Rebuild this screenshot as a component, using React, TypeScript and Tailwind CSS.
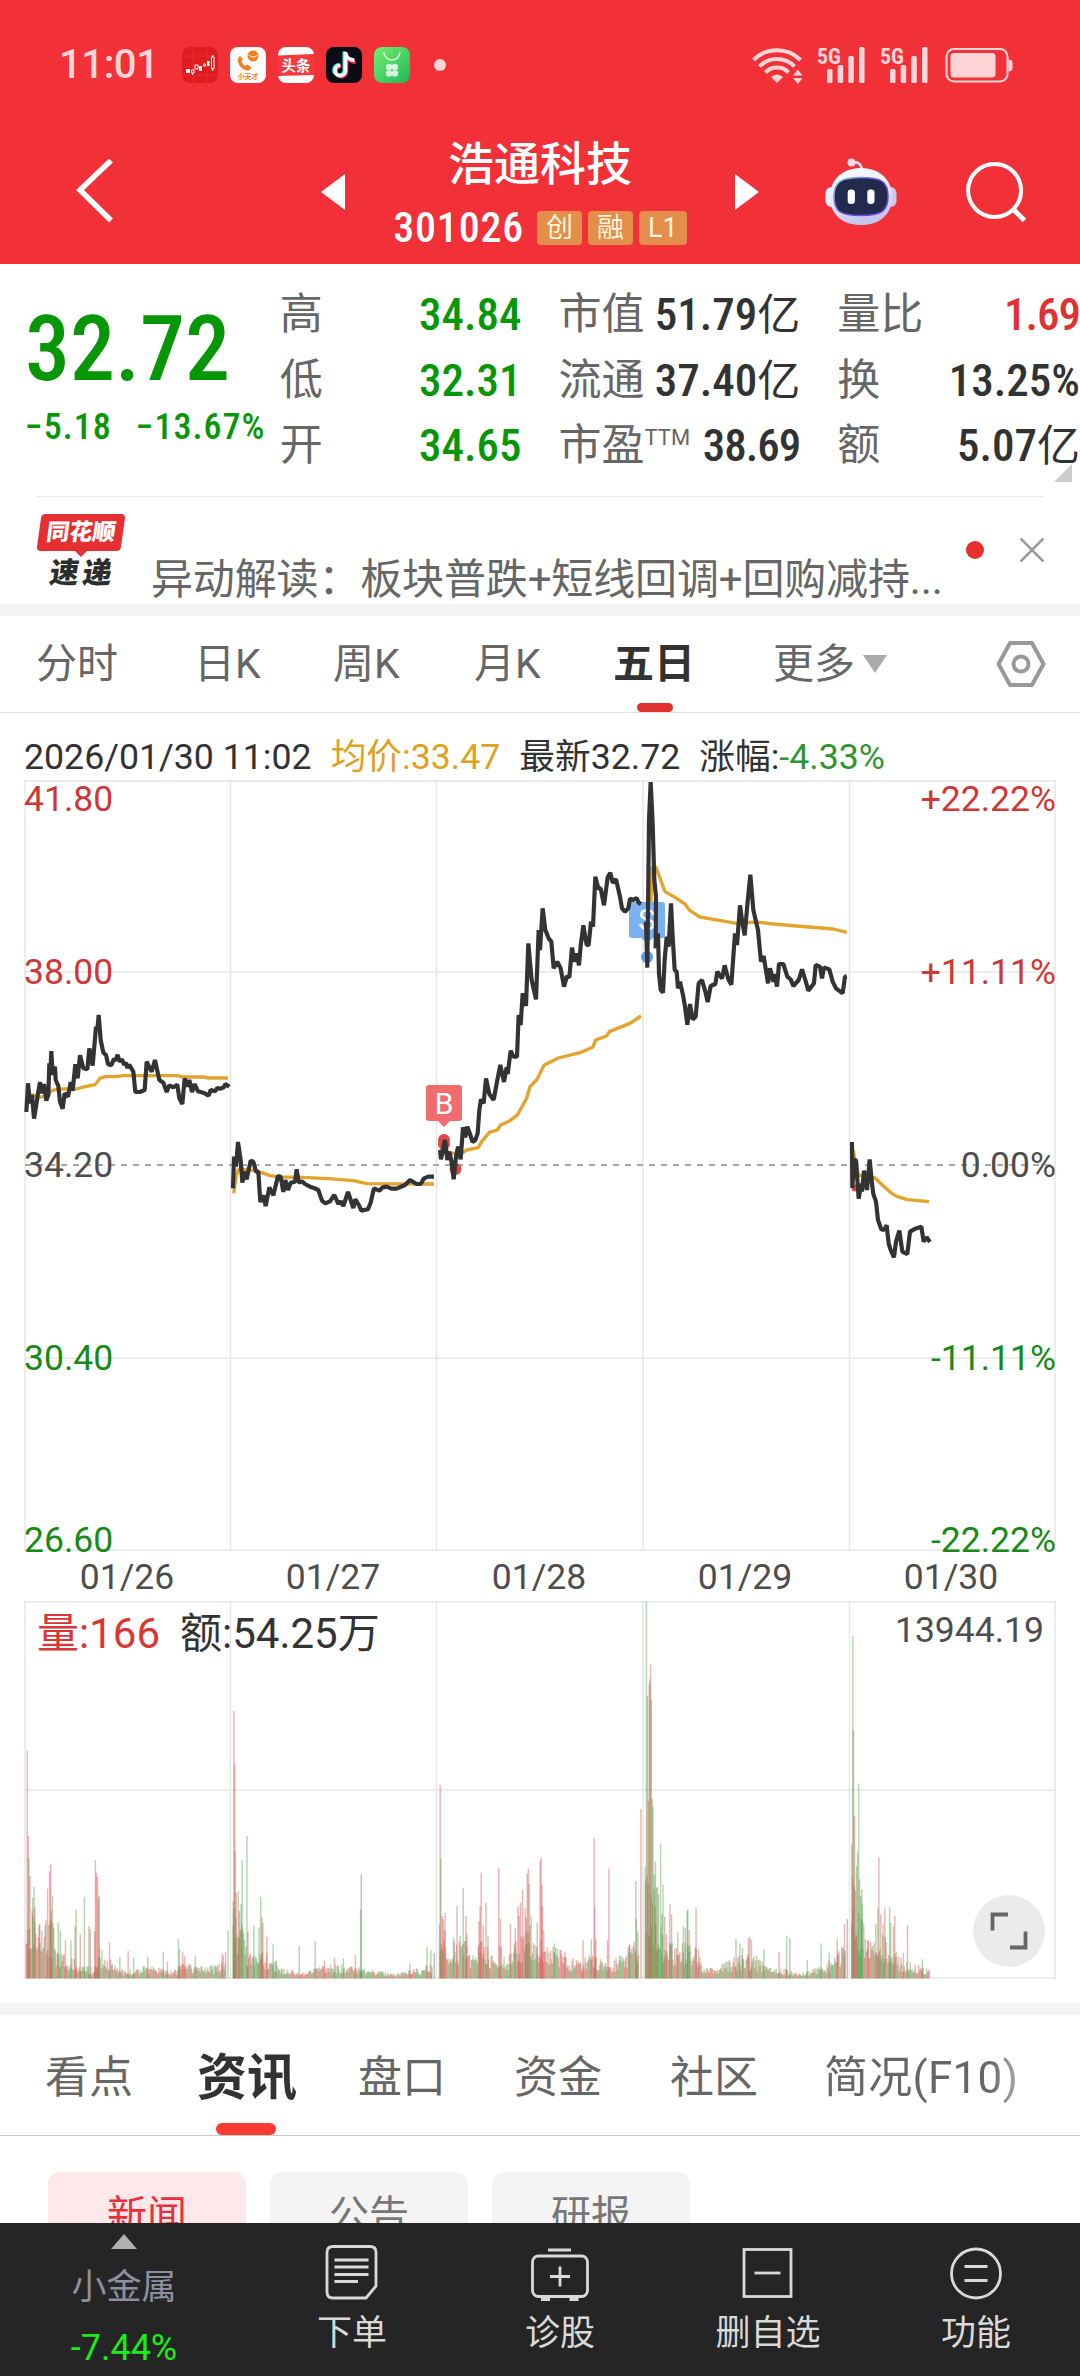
import React from 'react';

type Point = [number, number];

interface StatRow {
  label: string;
  sup?: string;
  value: string;
  unit?: string;
  color: string;
}

const statColumns: { className: string; rows: StatRow[] }[] = [
  {
    className: 'w-[242px]',
    rows: [
      { label: '高', value: '34.84', color: 'text-[#069606]' },
      { label: '低', value: '32.31', color: 'text-[#069606]' },
      { label: '开', value: '34.65', color: 'text-[#069606]' },
    ],
  },
  {
    className: 'ml-[37px] w-[242px]',
    rows: [
      { label: '市值', value: '51.79', unit: '亿', color: 'text-[#323232]' },
      { label: '流通', value: '37.40', unit: '亿', color: 'text-[#323232]' },
      { label: '市盈', sup: 'TTM', value: '38.69', color: 'text-[#323232] tracking-[-1px]' },
    ],
  },
  {
    className: 'ml-[37px] w-[243px]',
    rows: [
      { label: '量比', value: '1.69', color: 'text-[#e03232] tracking-[-1px]' },
      { label: '换', value: '13.25%', color: 'text-[#323232]' },
      { label: '额', value: '5.07', unit: '亿', color: 'text-[#323232]' },
    ],
  },
];

// Every trading day is drawn in its own group, in thirds of a pixel
interface DayLine {
  transform: string;
  price: string;
  average: string;
}

const dayLines: DayLine[] = [
  {
    transform: 'translate(0 960) scale(0.33333)',
    price:
      '79,456 84,370 90,430 96,405 102,476 108,440 114,400 120,366 126,400 132,372 139,422 145,405 148,310 151,340 154,273 158,345 165,320 167,360 175,378 180,425 188,446 194,400 204,410 212,366 218,392 226,313 233,355 240,286 250,325 262,328 268,265 278,317 288,200 292,210 296,165 302,240 310,278 318,285 324,312 334,316 342,296 348,302 352,284 360,305 366,298 372,314 378,308 382,324 388,314 400,335 406,396 420,396 434,390 440,305 448,322 455,335 465,300 478,360 490,368 500,396 508,376 520,382 532,374 538,415 547,432 554,355 562,380 568,360 576,396 584,372 594,394 612,399 626,407 632,390 645,394 652,384 660,386 672,382 676,372 688,380',
    average:
      '79,408 100,405 115,412 140,408 155,392 175,387 230,387 250,381 285,374 300,355 315,350 350,350 370,347 530,347 550,351 610,351 625,354 684,354',
  },
  {
    transform: 'translate(0 960) scale(0.33333)',
    price:
      '699,685 702,590 708,620 714,546 722,600 727,668 733,635 740,658 752,602 760,605 768,635 775,635 781,726 790,706 797,738 808,682 820,706 834,648 842,650 850,696 856,660 864,690 872,668 885,665 890,628 896,668 906,664 915,672 930,680 942,684 955,690 966,722 976,730 990,724 1003,705 1015,732 1022,724 1030,738 1044,696 1060,744 1066,718 1078,738 1084,752 1104,748 1112,728 1122,685 1138,692 1148,682 1160,680 1174,686 1190,686 1215,675 1230,660 1250,672 1262,672 1272,655 1285,650 1302,650',
    average:
      '701,700 708,650 714,630 730,628 765,632 785,638 810,647 840,651 905,652 985,656 1060,662 1100,671 1302,672',
  },
  {
    transform: 'translate(420 780) scale(0.33333)',
    price:
      '60,1110 63,1138 70,1105 75,1080 82,1140 88,1115 94,1142 101,1198 108,1130 114,1100 122,1138 129,1042 136,1072 142,1040 150,1062 158,1086 166,1080 173,1060 178,990 183,958 191,970 198,895 208,942 221,960 232,900 241,855 252,906 260,862 263,882 272,812 280,830 291,830 296,705 302,735 308,640 318,678 325,490 335,600 348,658 356,450 360,510 368,385 376,450 386,475 394,485 401,565 412,545 422,565 432,620 441,588 448,592 456,503 463,545 470,520 477,556 482,498 490,436 500,495 506,495 513,425 519,440 526,290 535,325 542,325 552,376 563,292 571,278 578,308 588,298 600,350 606,385 615,395 625,385 630,356 640,360 650,354 656,368 663,372',
    average:
      '60,1110 100,1120 130,1117 140,1110 175,1103 185,1085 208,1057 232,1050 243,1034 270,1022 292,1005 320,955 330,920 350,900 372,856 415,834 480,818 518,802 527,780 560,768 568,755 630,730 663,708',
  },
  {
    transform: 'translate(420 780) scale(0.33333)',
    price:
      '678,425 682,563 687,120 692,6 698,130 703,300 708,350 707,505 714,460 717,580 722,630 729,638 734,540 740,470 746,500 753,370 758,470 764,570 770,575 774,625 780,605 790,650 795,680 802,734 810,672 818,718 827,710 836,610 846,600 856,635 863,666 872,618 886,612 892,575 906,596 914,556 925,598 934,614 945,460 951,495 960,376 966,420 974,466 982,375 991,284 1000,390 1014,450 1023,545 1031,528 1044,610 1050,565 1060,605 1064,582 1071,620 1077,552 1090,552 1102,590 1112,598 1120,618 1136,600 1146,568 1156,600 1165,632 1182,610 1187,555 1200,560 1206,595 1212,562 1228,568 1238,605 1248,625 1268,640 1275,590 1280,588',
    average:
      '684,480 692,400 696,262 708,262 720,295 735,335 765,352 795,372 810,392 840,411 880,418 950,430 1010,426 1060,432 1130,438 1240,447 1280,457',
  },
  {
    transform: 'translate(820 1100) scale(0.33333)',
    price:
      '96,126 97,264 102,180 108,180 112,240 116,296 124,250 126,275 132,212 141,270 149,178 156,250 160,282 168,305 174,360 184,388 192,390 200,376 206,430 212,450 222,472 228,425 238,392 247,455 262,462 270,395 286,386 304,380 311,425 320,412 330,426',
    average: '100,150 106,190 115,225 130,228 165,234 190,258 215,280 230,289 262,299 327,305',
  },
];

const gridX = [25, 230.5, 436.5, 643, 849.5, 1055];
const dates = ['01/26', '01/27', '01/28', '01/29', '01/30'];

const priceLabels = [
  { y: 811, left: '41.80', right: '+22.22%', color: '#cf3636' },
  { y: 984, left: '38.00', right: '+11.11%', color: '#cf3636' },
  { y: 1177, left: '34.20', right: '0.00%', color: '#4d4d4d' },
  { y: 1370, left: '30.40', right: '-11.11%', color: '#158a15' },
  { y: 1552, left: '26.60', right: '-22.22%', color: '#158a15' },
];

type Spike = [number, number, 'r' | 'g' | 'k'];

// base: outline of the ordinary bars, spikes: the minutes that stand out. [x, top of bar]
interface VolumeDay {
  base: Point[];
  spikes: Spike[];
}

const volumeDays: VolumeDay[] = [
  {
    base: [[76, 1150], [90, 1170], [105, 1220], [150, 1190], [165, 1270], [200, 1290], [245, 1310], [270, 1315], [286, 1270], [300, 1278], [330, 1305], [360, 1325], [430, 1310], [500, 1325], [540, 1300], [560, 1315], [630, 1310], [655, 1275]],
    spikes: [[79, 660, 'r'], [82, 915, 'r'], [84, 980, 'g'], [87, 1035, 'r'], [95, 1100, 'g'], [99, 1068, 'g'], [101, 1130, 'r'], [115, 1178, 'r'], [138, 1073, 'r'], [144, 1020, 'r'], [147, 1000, 'r'], [149, 1140, 'r'], [152, 1095, 'g'], [169, 1175, 'g'], [175, 1197, 'g'], [190, 1228, 'r'], [206, 1228, 'g'], [218, 1186, 'r'], [221, 1137, 'g'], [233, 1210, 'r'], [245, 1098, 'g'], [258, 1186, 'r'], [262, 1194, 'g'], [275, 1200, 'r'], [277, 987, 'r'], [280, 1026, 'r'], [283, 1038, 'r'], [286, 1100, 'r'], [288, 1093, 'g'], [318, 1234, 'r'], [348, 1278, 'g'], [372, 1260, 'r'], [388, 1280, 'g'], [429, 1277, 'r'], [474, 1262, 'g'], [486, 1292, 'r'], [518, 1224, 'g'], [521, 1254, 'g'], [530, 1262, 'r'], [536, 1275, 'r'], [567, 1275, 'g'], [645, 1268, 'r'], [655, 1262, 'r'], [662, 1198, 'g']],
  },
  {
    base: [[677, 1130], [700, 1190], [720, 1260], [750, 1280], [780, 1285], [810, 1308], [870, 1330], [940, 1310], [1030, 1310], [1060, 1320], [1150, 1330], [1230, 1315], [1255, 1300]],
    spikes: [[677, 1110, 'g'], [679, 540, 'r'], [681, 700, 'r'], [683, 960, 'g'], [686, 1086, 'r'], [692, 1080, 'g'], [695, 1140, 'r'], [700, 1118, 'g'], [703, 988, 'g'], [717, 915, 'g'], [720, 1203, 'r'], [737, 1183, 'g'], [752, 1190, 'g'], [757, 1098, 'g'], [760, 1158, 'r'], [763, 1176, 'r'], [775, 1218, 'r'], [793, 1240, 'g'], [800, 1290, 'r'], [869, 1245, 'g'], [915, 1230, 'g'], [942, 1288, 'r'], [971, 1280, 'r'], [997, 1282, 'g'], [1032, 1272, 'r'], [1047, 1135, 'g'], [1049, 1030, 'k'], [1190, 1298, 'r'], [1240, 1247, 'g'], [1251, 1257, 'g'], [1261, 1266, 'k']],
  },
  {
    base: [[1276, 1180], [1300, 1260], [1340, 1240], [1380, 1295], [1400, 1230], [1435, 1300], [1455, 1250], [1470, 1300], [1490, 1250], [1540, 1220], [1560, 1220], [1580, 1270], [1610, 1265], [1680, 1300], [1720, 1285], [1770, 1310], [1810, 1275], [1855, 1240]],
    spikes: [[1278, 762, 'r'], [1280, 983, 'g'], [1284, 1155, 'r'], [1287, 1165, 'r'], [1292, 1145, 'r'], [1317, 1220, 'g'], [1327, 1125, 'r'], [1345, 1070, 'g'], [1353, 1155, 'r'], [1355, 1210, 'r'], [1391, 1170, 'r'], [1394, 1125, 'r'], [1397, 1025, 'r'], [1403, 1183, 'r'], [1411, 1115, 'r'], [1417, 1215, 'g'], [1448, 1010, 'r'], [1453, 1163, 'r'], [1482, 1178, 'r'], [1496, 1190, 'r'], [1504, 1126, 'r'], [1507, 1155, 'r'], [1511, 1115, 'r'], [1517, 1076, 'r'], [1525, 1130, 'r'], [1528, 1160, 'r'], [1531, 1028, 'r'], [1534, 1013, 'r'], [1537, 1058, 'g'], [1542, 1153, 'g'], [1560, 1175, 'r'], [1568, 990, 'r'], [1571, 981, 'r'], [1573, 1062, 'r'], [1575, 1126, 'r'], [1579, 1197, 'g'], [1610, 1237, 'g'], [1640, 1262, 'r'], [1693, 1228, 'r'], [1717, 1225, 'g'], [1725, 921, 'r'], [1727, 1128, 'r'], [1730, 1225, 'r'], [1764, 1228, 'r'], [1768, 1012, 'r'], [1827, 1240, 'r'], [1846, 1050, 'r'], [1848, 1163, 'g'], [1852, 1200, 'g'], [1861, 834, 'r']],
  },
  {
    base: [[1874, 1080], [1900, 1120], [1920, 1200], [1940, 1260], [1970, 1260], [2000, 1230], [2020, 1270], [2040, 1305], [2070, 1320], [2120, 1295], [2160, 1285], [2200, 1290], [2240, 1320], [2290, 1320], [2320, 1330], [2390, 1310], [2430, 1285], [2455, 1250]],
    spikes: [[1874, 1008, 'g'], [1877, 212, 'g'], [1880, 495, 'g'], [1883, 810, 'r'], [1885, 460, 'r'], [1887, 445, 'g'], [1889, 401, 'r'], [1891, 507, 'g'], [1894, 804, 'g'], [1896, 828, 'g'], [1900, 1030, 'g'], [1903, 992, 'r'], [1906, 1070, 'g'], [1909, 1068, 'r'], [1912, 1090, 'g'], [1918, 939, 'g'], [1922, 1150, 'g'], [1925, 1060, 'g'], [1930, 1158, 'r'], [1935, 1210, 'r'], [1945, 1120, 'r'], [1950, 1150, 'g'], [1968, 1204, 'g'], [1984, 1186, 'r'], [1990, 1192, 'g'], [1995, 1140, 'g'], [1997, 1135, 'g'], [2001, 1197, 'r'], [2021, 1130, 'r'], [2028, 1255, 'r'], [2137, 1224, 'g'], [2148, 1237, 'r'], [2156, 1250, 'g'], [2173, 1222, 'r'], [2177, 1217, 'r'], [2182, 1226, 'g'], [2218, 1255, 'g'], [2262, 1263, 'r'], [2284, 1214, 'g'], [2293, 1221, 'r'], [2344, 1288, 'g'], [2384, 1237, 'g'], [2408, 1265, 'g'], [2431, 1224, 'r'], [2452, 1179, 'r'], [2460, 1165, 'k']],
  },
  {
    base: [[2473, 1100], [2500, 1190], [2520, 1250], [2540, 1260], [2560, 1220], [2600, 1270], [2620, 1300], [2660, 1308], [2698, 1320]],
    spikes: [[2473, 940, 'g'], [2476, 315, 'g'], [2478, 598, 'r'], [2481, 855, 'r'], [2484, 1080, 'r'], [2487, 1005, 'g'], [2490, 965, 'g'], [2493, 757, 'g'], [2496, 1045, 'r'], [2499, 1095, 'g'], [2502, 1075, 'g'], [2504, 1117, 'g'], [2521, 1228, 'r'], [2543, 1178, 'g'], [2549, 1132, 'g'], [2552, 979, 'r'], [2557, 1150, 'r'], [2564, 1180, 'g'], [2569, 1132, 'r'], [2583, 1129, 'g'], [2586, 1176, 'g'], [2594, 1186, 'r'], [2598, 1155, 'r'], [2623, 1265, 'g'], [2635, 1183, 'r'], [2678, 1285, 'g']],
  },
];

const VOLUME_BOTTOM = 1342;
const barColors = { r: '#dd4a4a', g: '#43a043', k: '#666666' };

const noise = (n: number) => {
  const v = Math.sin(n * 12.9898) * 43758.5453;
  return v - Math.floor(v);
};

const topAt = (base: Point[], x: number) => {
  for (let i = 1; i < base.length; i++) {
    if (x <= base[i][0]) {
      const [x0, y0] = base[i - 1];
      const [x1, y1] = base[i];
      return y0 + ((y1 - y0) * (x - x0)) / (x1 - x0);
    }
  }
  return base[base.length - 1][1];
};

const getBars = (day: VolumeDay): Spike[] => {
  const bars: Spike[] = [];
  const last = day.base[day.base.length - 1][0];
  for (let x = day.base[0][0]; x <= last; x += 2.5) {
    const height = (VOLUME_BOTTOM - topAt(day.base, x)) * (0.4 + 0.9 * noise(x));
    bars.push([x, VOLUME_BOTTOM - Math.max(height, 5), noise(x * 0.7 + 3) > 0.52 ? 'r' : 'g']);
  }
  return bars.concat(day.spikes);
};

const Signal: React.FC = () => (
  <div className="flex w-[49px] items-start">
    <span className="w-[10px] font-stretch-75% text-[22px] font-bold leading-[21px] tracking-[-0.2px]">5G</span>
    <svg width="39" height="37" viewBox="0 0 39 37" fill="currentColor">
      <rect x="0" y="23" width="5.5" height="14" rx="1.5" />
      <rect x="10.7" y="19" width="5.5" height="18" rx="1.5" />
      <rect x="21.3" y="10" width="5.5" height="27" rx="1.5" />
      <rect x="32" y="1" width="5.5" height="36" rx="1.5" />
    </svg>
  </div>
);

const StatusBar: React.FC = () => (
  <div className="flex h-[129px] items-center pl-[59px] text-[#ffd5d7]">
    <span className="w-[123px] text-[40px] font-medium leading-none tracking-[-0.4px]">11:01</span>
    <div className="flex gap-3">
      <svg width="36" height="36" viewBox="0 0 36 36">
        <rect width="36" height="36" rx="8" fill="#e01c20" />
        <path d="M0 9h36M0 28h36M11 0v36M25 0v36" stroke="#e8343a" strokeWidth="0.7" />
        <path d="M4 26v-4h4v4zM17 24v-5h3v5zM25 19v-5h2.5v5z" fill="#fff" />
        <path d="M9.5 23h2.5v3h-2.5zM13 18h3v4h-3zM21.500 17h2v2h-2zM29.500 10h2.500v12h-2.500zM30.700 8v2M30.700 22v2M10.700 26v2" fill="none" stroke="#fff" strokeWidth="1" />
      </svg>
      <svg width="36" height="36" viewBox="0 0 36 36">
        <rect width="36" height="36" rx="8" fill="#fdfcfa" />
        <circle cx="23" cy="9" r="5.500" fill="#ee8220" />
        <path d="M18.500 8q4.500 4 9 0" fill="none" stroke="#fff" strokeWidth="0.900" />
        <path d="M10 9q-4 3-1 8.500t8.500 6q3-.5 4-3l-4-3-2.500 1.500q-3-2-3.500-5l1.500-2z" fill="#ee8220" />
        <text x="18" y="32" textAnchor="middle" fontSize="7" fontWeight="700" fill="#ee8220">小天才</text>
      </svg>
      <svg width="36" height="36" viewBox="0 0 36 36">
        <rect width="36" height="36" rx="8" fill="#fff" />
        <path d="M0 8.500L36 7v21L0 29z" fill="#f5383c" />
        <text x="18" y="23.500" textAnchor="middle" fontSize="14.500" fontWeight="700" fill="#fff">头条</text>
      </svg>
      <svg width="36" height="36" viewBox="0 0 36 36">
        <rect width="36" height="36" rx="8" fill="#0b0b18" />
        <g fill="none" strokeWidth="3.600">
          <path d="M18.500 5v18.500a5.200 5.200 0 1 1-5.200-5.200M18.500 5q.5 7.500 9 8.500" stroke="#25f4ee" transform="translate(-0.200 -0.600)" />
          <path d="M20.500 5v18.500a5.200 5.200 0 1 1-5.200-5.200M20.500 6q.5 7.500 9 8.500" stroke="#fe2c55" transform="translate(0 1)" />
          <path d="M19.500 5v18.500a5.200 5.200 0 1 1-5.200-5.200M19.500 5q.5 7.500 9 8.500" stroke="#fff" />
        </g>
      </svg>
      <svg width="36" height="36" viewBox="0 0 36 36">
        <defs>
          <linearGradient id="clover" x1="0" y1="0" x2="1" y2="1">
            <stop offset="0" stopColor="#76ee70" />
            <stop offset="1" stopColor="#1eb659" />
          </linearGradient>
        </defs>
        <rect width="36" height="36" rx="8" fill="url(#clover)" />
        <path d="M10 5a8 8 0 0 0 16 0" fill="none" stroke="#d8ffd8" strokeWidth="1.400" />
        <g fill="#d5f8dc">
          <circle cx="15" cy="20" r="3.200" />
          <circle cx="21" cy="20" r="3.200" />
          <circle cx="15" cy="26.500" r="3.200" />
          <circle cx="21" cy="26.500" r="3.200" />
        </g>
      </svg>
    </div>
    <span className="ml-6 size-3 rounded-full bg-current" />
    <svg className="ml-[306px]" width="52" height="38" viewBox="0 0 52 38" fill="none" stroke="currentColor" strokeWidth="4">
      <path d="M1.500 14A33 33 0 0 1 48.500 14" />
      <path d="M7.500 20.500A24 24 0 0 1 42.500 20.500" />
      <path d="M13.500 26.500A16 16 0 0 1 36.500 26.500" />
      <path d="M19 31q6-5 12 0l-6 6z" fill="currentColor" stroke="none" />
      <path d="M41 29.500l4.800-6 4.800 6zM41 32h9.600l-4.800 6z" fill="currentColor" stroke="none" />
    </svg>
    <div className="ml-[13px] flex gap-[14px]">
      <Signal />
      <Signal />
    </div>
    <svg className="ml-4" width="70" height="38" viewBox="0 0 70 38">
      <rect x="1.500" y="3" width="61" height="32.500" rx="7.500" fill="none" stroke="currentColor" strokeWidth="2" />
      <rect x="5.500" y="7" width="45" height="24.500" rx="3.500" fill="currentColor" />
      <path d="M63.500 13.500q4 0 4 3v6q0 3-4 3z" fill="currentColor" />
    </svg>
  </div>
);

const Robot: React.FC = () => (
  <svg className="ml-[66px]" width="72" height="68" viewBox="0 0 72 68">
    <defs>
      <linearGradient id="head" x1="0" y1="0" x2="0.300" y2="1">
        <stop offset="0" stopColor="#ffffff" />
        <stop offset="0.600" stopColor="#e4e8fb" />
        <stop offset="1" stopColor="#c3c6ee" />
      </linearGradient>
      <linearGradient id="rim" x1="0" y1="0" x2="1" y2="1">
        <stop offset="0" stopColor="#8fe0ef" />
        <stop offset="0.500" stopColor="#6a43d8" />
        <stop offset="1" stopColor="#7448ea" />
      </linearGradient>
    </defs>
    <path d="M27 4q9-1 10 8" fill="none" stroke="#f5dfe8" strokeWidth="2.500" />
    <circle cx="26.500" cy="4.500" r="4" fill="#f3dbe6" />
    <rect x="0.500" y="29" width="12" height="20" rx="6" fill="#eceefb" />
    <rect x="59.500" y="29" width="12" height="20" rx="6" fill="#c9ccf0" />
    <path d="M36 10c18 0 31 11 31 29S54 67 36 67 5 57 5 39s13-29 31-29z" fill="url(#head)" />
    <path d="M36 19.500c20 0 27 4 27 19s-7 19-27 19-27-4-27-19 7-19 27-19z" fill="#222b4e" stroke="url(#rim)" strokeWidth="1.500" />
    <rect x="22.700" y="31.500" width="7.200" height="14.500" rx="3.300" fill="#fff" />
    <rect x="42.300" y="31.500" width="7.200" height="14.500" rx="3.300" fill="#fff" />
  </svg>
);

const NavBar: React.FC = () => (
  <div className="flex h-[135px] items-center pb-[10px] text-white">
    <svg className="ml-[74px]" width="40" height="66" viewBox="0 0 40 66" fill="none" stroke="currentColor" strokeWidth="5.500">
      <path d="M37 1.500L6 31 37 61.500" />
    </svg>
    <svg className="ml-[207px]" width="24" height="36" viewBox="0 0 24 36" fill="currentColor">
      <path d="M24 0v36L0 18z" />
    </svg>
    <div className="flex w-[390px] flex-col items-center pt-[9px]">
      <h1 className="text-[46px] font-medium leading-[64px]">浩通科技</h1>
      <div className="flex h-[64px] items-center gap-[6px]">
        <span className="mr-[7px] font-stretch-87% text-[42px] font-medium leading-none tracking-[0.8px]">301026</span>
        {['创', '融', 'L1'].map((tag) => (
          <span key={tag} className="flex h-[34px] min-w-[45px] items-center justify-center rounded bg-[#e38e4b] px-[9px] text-[27px] leading-none text-[#fff6dc]">
            {tag}
          </span>
        ))}
      </div>
    </div>
    <svg width="24" height="36" viewBox="0 0 24 36" fill="currentColor">
      <path d="M0 0v36l24-18z" />
    </svg>
    <Robot />
    <svg className="ml-[67px]" width="64" height="64" viewBox="0 0 64 64" fill="none" stroke="currentColor" strokeWidth="4">
      <circle cx="30.600" cy="30.500" r="26.500" />
      <path d="M49 49l11.500 11.500" strokeWidth="5" />
    </svg>
  </div>
);

const QuotePanel: React.FC = () => (
  <section className="flex h-[232px] pt-[18px]">
    <div className="flex w-[280px] flex-col whitespace-nowrap pl-[25px] text-[#069606]">
      <span className="mt-5 font-stretch-87% text-[90px] font-medium leading-[96px]">32.72</span>
      <div className="mt-[9px] flex gap-6 font-stretch-87% text-[36px] font-medium leading-[40px] tracking-[1px]">
        <span>−5.18</span>
        <span>−13.67%</span>
      </div>
    </div>
    {statColumns.map((column) => (
      <div key={column.rows[0].label} className={column.className}>
        {column.rows.map((row) => (
          <div key={row.label} className="flex h-[65.500px] items-center justify-between whitespace-nowrap text-[43px] leading-none">
            <span className="flex items-center text-[#666]">
              {row.label}
              {row.sup && <span className="mb-4 text-[22px] leading-none">{row.sup}</span>}
            </span>
            <span className={row.color}>
              <span className="font-stretch-87% text-[45px] font-medium">{row.value}</span>
              {row.unit}
            </span>
          </div>
        ))}
      </div>
    ))}
  </section>
);

const NewsBar: React.FC = () => (
  <section className="mx-9 flex h-[108px] border-t border-[#ebebeb]">
    <div className="mt-[17px] flex w-[90px] flex-col items-center">
      <div className="flex h-[37px] w-[84px] -skew-x-[8deg] items-center justify-center rounded bg-[#e62f33] text-[23px] font-black leading-none text-white">
        同花顺
      </div>
      <svg width="12" height="6" viewBox="0 0 12 6" fill="#e62f33">
        <path d="M0 0h12L6 6z" />
      </svg>
      <div className="-skew-x-[8deg] pl-1 text-[29px] font-black leading-[32px] tracking-[4px] text-[#2d2d2d]">速递</div>
    </div>
    <p className="ml-[25px] mt-[53px] h-[54px] w-[790px] whitespace-nowrap text-[42px] leading-[60px] tracking-[-0.15px] text-[#666]">
      异动解读：板块普跌+短线回调+回购减持...
    </p>
    <span className="ml-[25px] mt-[44px] size-[18px] rounded-full bg-[#e62f2f]" />
    <svg className="ml-9 mt-[41px]" width="24" height="24" viewBox="0 0 24 24" stroke="#999" strokeWidth="2.600">
      <path d="M0.500 0.500l23 23M23.500 0.500l-23 23" />
    </svg>
  </section>
);

const PeriodTabs: React.FC = () => (
  <nav className="flex h-[97px] items-center whitespace-nowrap border-b border-[#e2e2e2] pl-9 text-[41px] leading-[98px] text-[#666]">
    <span className="w-[158px]">分时</span>
    <span className="w-[139px]">日K</span>
    <span className="w-[141px]">周K</span>
    <span className="w-[139px]">月K</span>
    <span className="relative w-[82px] font-bold text-[#323232]">
      五日
      <span className="absolute bottom-px left-[24px] h-[9px] w-[36px] rounded-full bg-[#e23030]" />
    </span>
    <span className="ml-[78px]">更多</span>
    <svg className="ml-2" width="24" height="18" viewBox="0 0 24 18" fill="#aaa">
      <path d="M0 0h24L12 18z" />
    </svg>
    <svg className="ml-[109px]" width="50" height="48" viewBox="0 0 50 48" fill="none" stroke="#999" strokeWidth="4">
      <path d="M14 3h22l11.500 21L36 45H14L2.500 24z" strokeLinejoin="round" />
      <circle cx="25" cy="24" r="7.500" />
    </svg>
  </nav>
);

const PriceChart: React.FC = () => (
  <svg className="block overflow-visible" width="1080" height="821" viewBox="0 780 1080 821" fontSize="35.500">
    <g stroke="#e6e6e6" strokeWidth="1.500">
      <path d="M24 781H1056M24 972H1056M24 1358H1056M24 1550H1056" />
      {gridX.map((x) => (
        <path key={x} d={`M${x} 780V1551`} />
      ))}
    </g>
    <path d="M25 1165H1055" stroke="#8c8c8c" strokeWidth="1.600" strokeDasharray="6 6" />

    {priceLabels.map((label) => (
      <g key={label.left} fill={label.color}>
        <text x="24" y={label.y}>{label.left}</text>
        <text x="1056" y={label.y} textAnchor="end">{label.right}</text>
      </g>
    ))}
    {dates.map((date, i) => (
      <text key={date} x={127 + i * 206} y="1589" textAnchor="middle" fill="#4d4d4d">{date}</text>
    ))}

    {dayLines.map((day, i) => (
      <polyline key={i} transform={day.transform} points={day.average} fill="none" stroke="#e3a32c" strokeWidth="10" strokeLinejoin="round" />
    ))}

    <g fill="#e04848">
      <circle cx="444" cy="1140" r="6" />
      <circle cx="444" cy="1144" r="6" />
      <circle cx="455.500" cy="1169" r="6" />
      <circle cx="855" cy="1188" r="3.500" />
    </g>
    <path d="M429 1085h30q3 0 3 3v30q0 3-3 3h-9l-6 6-6-6h-9q-3 0-3-3v-30q0-3 3-3z" fill="#f06c6e" />
    <text x="444" y="1114" textAnchor="middle" fontSize="30" fill="#fff">B</text>
    <path d="M632 902h30q3 0 3 3v30q0 3-3 3h-9l-6 5-6-5h-9q-3 0-3-3v-30q0-3 3-3z" fill="#7bb0f2" />
    <text x="647" y="930" textAnchor="middle" fontSize="30" fill="#fff">S</text>
    <circle cx="647" cy="957" r="6" fill="#5f9ce4" />

    {dayLines.map((day, i) => (
      <polyline key={i} transform={day.transform} points={day.price} fill="none" stroke="#333" strokeWidth="12.500" strokeLinejoin="bevel" />
    ))}
  </svg>
);

const VolumeChart: React.FC = () => (
  <section className="relative h-[402px]">
    <svg className="block" width="1080" height="378" viewBox="0 1600 1080 378" fontSize="35.500">
      <g stroke="#e6e6e6" strokeWidth="1.500">
        <path d="M24 1601H1056M24 1789H1056M24 1977H1056" />
        {gridX.map((x) => (
          <path key={x} d={`M${x} 1600V1978`} />
        ))}
      </g>
      <g transform="translate(0 1530) scale(0.34439 0.33333)" fillOpacity="0.420">
        {volumeDays.map((day, i) =>
          getBars(day).map(([x, top, kind], j) => (
            <rect key={`${i}-${j}`} x={x - 2} y={top} width="4.200" height={VOLUME_BOTTOM - top} fill={barColors[kind]} />
          ))
        )}
      </g>
      <text x="37" y="1647" fontSize="42" fill="#d93636">量:166</text>
      <text x="180" y="1647" fontSize="42" fill="#333">额:54.25万</text>
      <text x="1044" y="1641" textAnchor="end" fill="#4d4d4d">13944.19</text>
    </svg>
    <button className="absolute left-[973px] top-[294px] flex size-[72px] items-center justify-center rounded-full bg-[#ebebeb]">
      <svg width="38" height="38" viewBox="0 0 38 38" fill="none" stroke="#666" strokeWidth="3.800">
        <path d="M2.500 18.500V2.500H18M35.500 19.500v16H20" />
      </svg>
    </button>
  </section>
);

const ContentTabs: React.FC = () => (
  <nav className="flex h-[121px] whitespace-nowrap border-b border-[#c6c6c6] pl-[45px] text-[44px] leading-[126px] text-[#666]">
    <span className="w-[152px]">看点</span>
    <span className="relative w-[100px] text-[50px] font-bold text-[#323232]">
      资讯
      <span className="absolute bottom-0 left-[19px] h-3 w-[60px] rounded-full bg-[#fb3b32]" />
    </span>
    <span className="ml-[61px] w-[156px]">盘口</span>
    <span className="w-[156px]">资金</span>
    <span className="w-[154px]">社区</span>
    <span className="bg-linear-to-r from-[#666] from-85% to-[#aaa] bg-clip-text tracking-[0.3px] text-transparent">简况(F10)</span>
  </nav>
);

const NewsChips: React.FC = () => (
  <div className="flex h-[87px] gap-6 overflow-hidden pl-12 pt-9 text-[40px]">
    <span className="flex h-[87px] w-[198px] shrink-0 items-center justify-center rounded-xl bg-[#ffe8ea] text-[#e8303c]">新闻</span>
    <span className="flex h-[87px] w-[198px] shrink-0 items-center justify-center rounded-xl bg-[#f4f4f4] text-[#777]">公告</span>
    <span className="flex h-[87px] w-[198px] shrink-0 items-center justify-center rounded-xl bg-[#f4f4f4] text-[#777]">研报</span>
  </div>
);

const toolbarItems = [
  {
    label: '下单',
    icon: (
      <>
        <path d="M10 4.500h37q6 0 6 6V44L43 56H10q-6 0-6-6V10.500q0-6 6-6z" />
        <path d="M11.500 18h34M11.500 25h34M11.500 32.500h34M11.500 39.500h23.500" />
      </>
    ),
  },
  {
    label: '诊股',
    icon: (
      <>
        <rect x="1.500" y="14" width="55" height="40.500" rx="6" />
        <path d="M17 8h23M29 24.500v20M19 34.500h20M10 57.500h9M38.500 57.500h9" />
      </>
    ),
  },
  {
    label: '删自选',
    icon: (
      <>
        <rect x="5" y="7.500" width="47" height="47" />
        <path d="M15.500 31h26" />
      </>
    ),
  },
  {
    label: '功能',
    icon: (
      <>
        <circle cx="29" cy="31.500" r="24.500" />
        <path d="M17.500 24.500h23M17.500 38.500h23" />
      </>
    ),
  },
];

const Toolbar: React.FC = () => (
  <footer className="flex h-[153px] bg-[#252525] text-[35px] text-[#d9d9d9]">
    <div className="flex w-[248px] flex-col items-center">
      <svg className="mt-[11px]" width="26" height="15" viewBox="0 0 26 15" fill="#b0b0b0">
        <path d="M0 15h26L13 0z" />
      </svg>
      <span className="mt-[14px] leading-[50px] text-[#8e90a0]">小金属</span>
      <span className="mt-[10px] text-[36px] leading-[50px] text-[#19ee19]">-7.44%</span>
    </div>
    {toolbarItems.map((item) => (
      <div key={item.label} className="flex w-[208px] flex-col items-center pt-[19px]">
        <svg width="58" height="62" viewBox="0 0 58 62" fill="none" stroke="currentColor" strokeWidth="2.800">
          {item.icon}
        </svg>
        <span className="mt-[5px] leading-[50px]">{item.label}</span>
      </div>
    ))}
  </footer>
);

const App: React.FC = () => {
  return (
    <div className="flex h-[2376px] w-[1080px] flex-col overflow-hidden bg-white font-[Roboto,'Noto_Sans_CJK_SC',sans-serif]">
      <header className="h-[264px] bg-[#f13038]">
        <StatusBar />
        <NavBar />
      </header>
      <div className="relative">
        <QuotePanel />
        <svg className="absolute bottom-[14px] right-2" width="18" height="18" viewBox="0 0 18 18" fill="#ccc">
          <path d="M18 0v18H0z" />
        </svg>
      </div>
      <NewsBar />
      <div className="h-3 bg-[#f4f4f4]" />
      <PeriodTabs />
      <div className="flex h-[67px] gap-[19px] whitespace-nowrap pl-6 pt-[18px] text-[35.700px] leading-[53px] text-[#323232]">
        <span>2026/01/30 11:02</span>
        <span className="text-[#e0a020]">均价:33.47</span>
        <span>最新32.72</span>
        <span>
          涨幅:<span className="text-[#319331]">-4.33%</span>
        </span>
      </div>
      <PriceChart />
      <VolumeChart />
      <div className="h-3 bg-[#f4f4f4]" />
      <ContentTabs />
      <NewsChips />
      <Toolbar />
    </div>
  );
};

export default App;
